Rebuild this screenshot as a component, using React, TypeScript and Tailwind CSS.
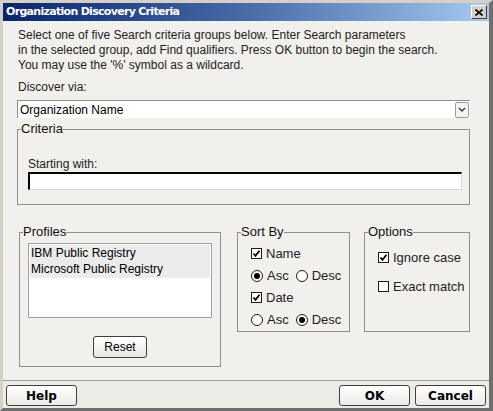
import React from 'react';

const sans = { fontFamily: '"Liberation Sans", Arial, sans-serif' };

const CheckBox = ({ checked }: { checked: boolean }) => (
  <span className="inline-flex h-[11px] w-[11px] items-center justify-center border border-[#1c1c1c] bg-white">
    {checked && (
      <svg width="9" height="9" viewBox="0 0 9 9">
        <path d="M1.5 4.5 L3.5 6.8 L7.5 1.8" stroke="#000" strokeWidth="1.8" fill="none" />
      </svg>
    )}
  </span>
);

const Radio = ({ checked }: { checked: boolean }) => (
  <span className="inline-flex h-[12px] w-[12px] items-center justify-center rounded-full border border-[#1c1c1c] bg-white">
    {checked && <span className="h-[6px] w-[6px] rounded-full bg-black" />}
  </span>
);

const Group = ({
  title,
  className,
  inner,
  children,
}: {
  title: string;
  className: string;
  inner: string;
  children?: React.ReactNode;
}) => (
  <fieldset className={`border border-[#8f8f8f] ${className}`}>
    <legend className="ml-[3px] text-[13px] leading-[12px] text-[#111]">{title}</legend>
    <div className={inner}>{children}</div>
  </fieldset>
);

const FooterButton = ({ label, className }: { label: string; className: string }) => (
  <button
    className={`h-[21px] rounded-[3px] border border-[#3f3f3f] bg-gradient-to-b from-white to-[#ecebe6] text-[12px] font-bold text-black ${className}`}
    style={{ fontFamily: '"DejaVu Sans", Tahoma, sans-serif' }}
  >
    {label}
  </button>
);

export default function App() {
  return (
    <div
      className="flex h-[411px] w-[493px] flex-col border-l-[3px] border-r-[4px] border-t-[3px] border-b-[3px] border-l-[#d4d0c8] border-r-[#6f6f6f] border-t-[#d4d0c8] border-b-[#6f6f6f] bg-[#f1f0ec]"
      style={sans}
    >
      {/* title bar */}
      <div className="flex h-[18px] items-center justify-between bg-gradient-to-r from-[#0a246a] via-[#4a6aa8] to-[#a6caf0] pl-[3px] pr-[2px]">
        <span className="text-[11px] font-bold text-white" style={{ fontFamily: '"DejaVu Sans", Tahoma, sans-serif', letterSpacing: '-0.7px' }}>
          Organization Discovery Criteria
        </span>
        <span className="flex h-[14px] w-[16px] items-center justify-center border border-b-[#404040] border-l-white border-r-[#404040] border-t-white bg-[#d4d0c8]">
          <svg width="8" height="7" viewBox="0 0 8 7">
            <path d="M0.5 0.5 L7.5 6.5 M7.5 0.5 L0.5 6.5" stroke="#000" strokeWidth="1.6" />
          </svg>
        </span>
      </div>

      {/* body */}
      <div className="flex flex-1 flex-col pl-[14px] pr-[19px] text-[12px] text-[#222]">
        <p className="mt-[7px] pl-[1px] leading-[15px]">
          Select one of five Search criteria groups below. Enter Search parameters
          <br />
          in the selected group, add Find qualifiers. Press OK button to begin the search.
          <br />
          You may use the '%' symbol as a wildcard.
        </p>

        <div className="mt-[7px] pl-[1px] leading-[14px]">Discover via:</div>

        <div className="mt-[6px] flex h-[18px] items-center border-l border-t border-[#8e8e8e] bg-white">
          <span className="flex-1 pl-[2px] text-[12px] text-black">Organization Name</span>
          <span className="mr-[1px] flex h-[16px] w-[14px] items-center justify-center rounded-[2px] border border-[#9c9c9c] bg-[#f3f3f1]">
            <svg width="8" height="5" viewBox="0 0 8 5">
              <path d="M1 1 L4 4 L7 1" stroke="#333" strokeWidth="1.3" fill="none" />
            </svg>
          </span>
        </div>

        <Group title="Criteria" className="mt-[5px] h-[82px]" inner="pl-[10px] pr-[7px]">
          <div className="mt-[22px] leading-[14px]">Starting with:</div>
          <div className="mt-[1px] h-[18px] border-b border-l-2 border-r border-t-2 border-b-[#d8d8d8] border-l-black border-r-[#d8d8d8] border-t-black bg-white" />
        </Group>

        <div className="mt-[21px] flex items-start">
          <Group title="Profiles" className="ml-[2px] h-[141px] w-[202px]" inner="px-[8px]">
            <div className="mt-[5px] h-[75px] border border-[#a0a0a0] bg-white text-[12px] text-black">
              <div className="mx-[1px] mt-[1px] bg-[#ebebeb] leading-[16px]">
                <div className="pl-[1px]">IBM Public Registry</div>
                <div className="pb-[1px] pl-[1px]">Microsoft Public Registry</div>
              </div>
            </div>
            <div className="mt-[18px] flex justify-center">
              <button className="h-[22px] w-[54px] rounded-[3px] border border-[#3f3f3f] bg-gradient-to-b from-white to-[#e8e7e2] text-[12px] text-black">
                Reset
              </button>
            </div>
          </Group>

          <Group title="Sort By" className="ml-[16px] h-[106px] w-[113px]" inner="pl-[13px]">
            <div className="mt-[8px] flex flex-col gap-[7px] text-[13px] leading-[15px] text-[#222]">
              <label className="flex items-center gap-[4px]">
                <CheckBox checked /> Name
              </label>
              <div className="flex items-center">
                <label className="flex items-center gap-[4px]">
                  <Radio checked /> Asc
                </label>
                <label className="ml-[7px] flex items-center gap-[4px]">
                  <Radio checked={false} /> Desc
                </label>
              </div>
              <label className="flex items-center gap-[4px]">
                <CheckBox checked /> Date
              </label>
              <div className="flex items-center">
                <label className="flex items-center gap-[4px]">
                  <Radio checked={false} /> Asc
                </label>
                <label className="ml-[7px] flex items-center gap-[4px]">
                  <Radio checked /> Desc
                </label>
              </div>
            </div>
          </Group>

          <Group title="Options" className="ml-[14px] h-[106px] w-[106px]" inner="pl-[13px]">
            <div className="mt-[12px] flex flex-col gap-[14px] text-[13px] leading-[15px] text-[#222]">
              <label className="flex items-center gap-[4px]">
                <CheckBox checked /> Ignore case
              </label>
              <label className="flex items-center gap-[4px]">
                <CheckBox checked={false} /> Exact match
              </label>
            </div>
          </Group>
        </div>
      </div>

      {/* footer */}
      <div className="flex h-[28px] items-start border-t border-[#9a9a9a] bg-[#ecebe6] pl-[3px] pr-[3px] pt-[4px]">
        <FooterButton label="Help" className="w-[71px]" />
        <div className="flex-1" />
        <FooterButton label="OK" className="w-[71px]" />
        <FooterButton label="Cancel" className="ml-[5px] w-[71px]" />
      </div>
    </div>
  );
}
